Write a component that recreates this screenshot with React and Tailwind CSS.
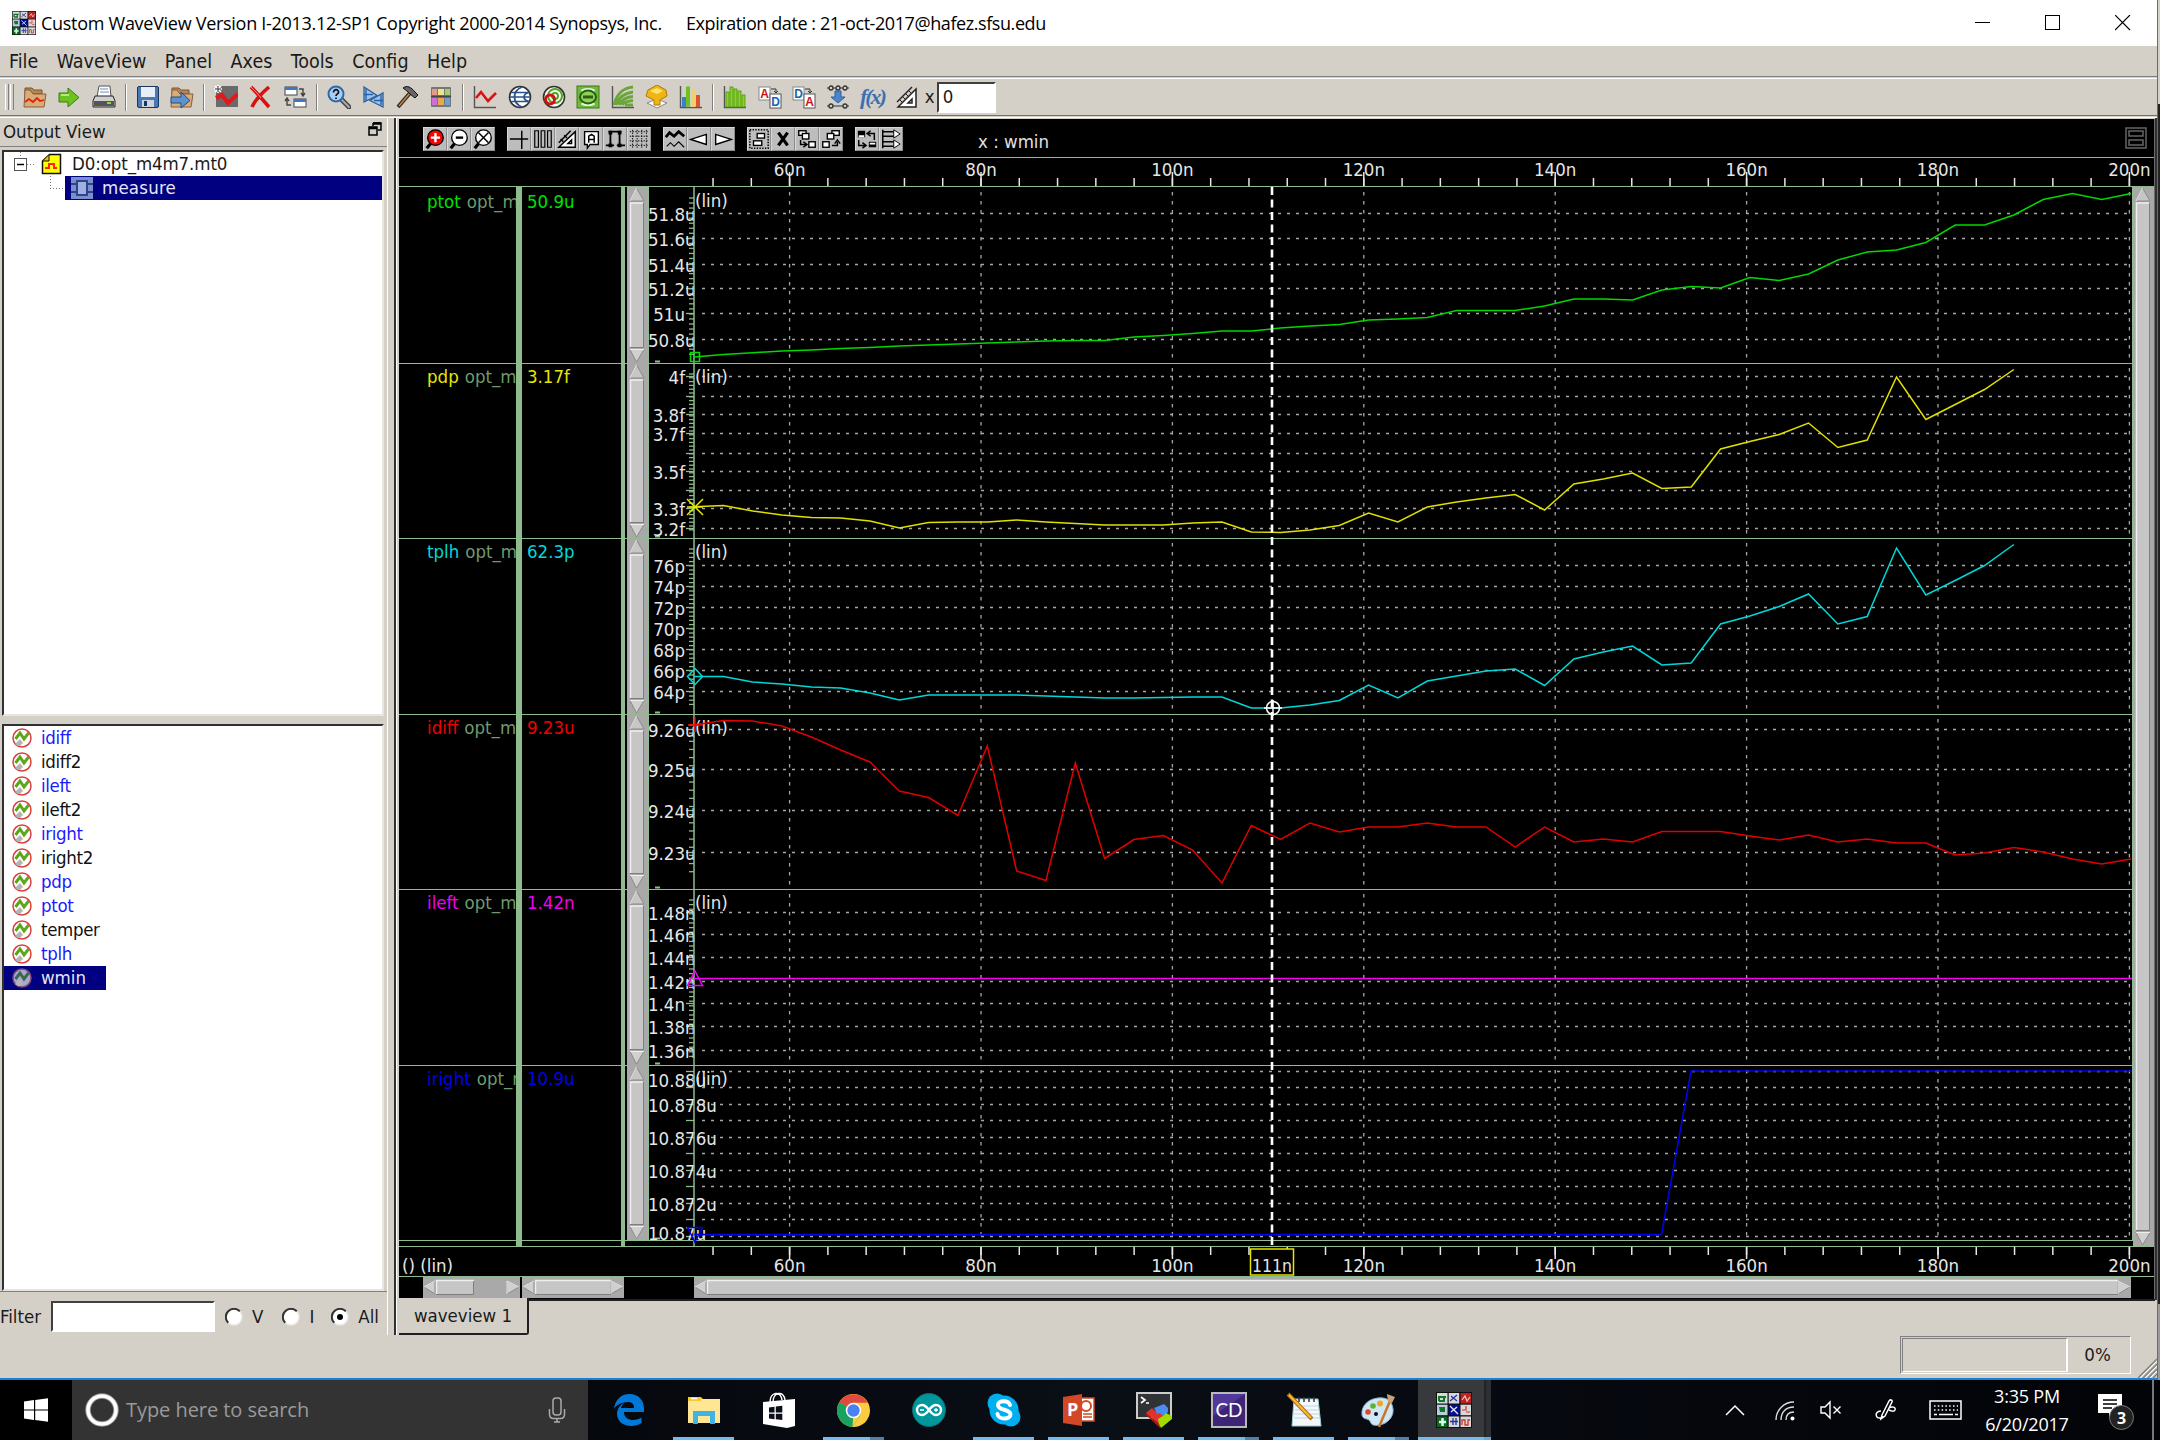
import React from "react";

const GREEN = "#8fbc8f";

function Ico({ s = 24, vb = 24, children, className = "" }) {
  return (
    <svg width={s} height={s} viewBox={`0 0 ${vb} ${vb}`} className={"block shrink-0 " + className}>
      {children}
    </svg>
  );
}

/* ---------- main toolbar icons ---------- */
const Folder = (
  <>
    <path d="M2 3h7l2 2h8v4H2z" fill="#b98552" stroke="#7d5530" />
    <path d="M1 22L2 5h5l3 4h13l-2 13z" fill="#d9ac78" stroke="#85603a" />
  </>
);
const OpenIcon = (
  <Ico>
    {Folder}
    <path d="M2 17l4-3 4 3 4-4 3 3 4-1" fill="none" stroke="#e3200f" strokeWidth="1.8" />
  </Ico>
);
const ArrowIcon = (
  <Ico>
    <path d="M2 8h9V3l11 9.5L11 22v-5H2z" fill="#6cc21f" stroke="#3c7a12" />
    <path d="M4 10h8" stroke="#b7ec6f" strokeWidth="2" />
  </Ico>
);
const PrintIcon = (
  <Ico>
    <path d="M7 1h11l1 11H5z" fill="#fff" stroke="#555" />
    <path d="M8 4h8M8 7h9" stroke="#6a8fc0" />
    <path d="M3 11h18l2 5v6H1v-6z" fill="#d0d0d0" stroke="#222" />
    <path d="M2 16h20v5H2z" fill="#555" />
    <path d="M15 18h4" stroke="#7ee03a" strokeWidth="2" />
  </Ico>
);
const SaveIcon = (
  <Ico>
    <rect x="1.5" y="1.5" width="21" height="21" rx="1.5" fill="#4a78b5" stroke="#17375f" />
    <rect x="5" y="2" width="14" height="10" fill="#e8eef6" />
    <rect x="6" y="15" width="12" height="7" fill="#cfd4da" />
    <rect x="8" y="16" width="3" height="5" fill="#17375f" />
  </Ico>
);
const ExportIcon = (
  <Ico>
    {Folder}
    <path d="M1 12h10V7l9 8.5L11 23v-5H1z" fill="#5b92cf" stroke="#234f83" />
  </Ico>
);
const NewWaveIcon = (
  <Ico>
    <path d="M7 1h17v21H2V8z" fill="#6a6a6a" />
    <path d="M2 13l6-3 6 8 10-9" fill="none" stroke="#e01a1a" strokeWidth="4.2" />
    <path d="M4 0v8M0 4h8M1 1l6 6M7 1L1 7" stroke="#fff" strokeWidth="1.6" />
    <path d="M4 1v6M1 4h6" stroke="#333" />
  </Ico>
);
const DeleteIcon = (
  <Ico>
    <path d="M3 2c4 4 12 13 18 20M21 2C14 8 7 15 4 22" stroke="#d81010" strokeWidth="3.6" fill="none" />
    <path d="M3 2c4 4 8 8 10 11" stroke="#ff8a80" fill="none" />
  </Ico>
);
const CycleIcon = (
  <Ico>
    <rect x="2" y="2" width="12" height="8" fill="#fff" stroke="#444" />
    <rect x="2" y="2" width="12" height="3" fill="#3f77c2" />
    <rect x="11" y="14" width="12" height="8" fill="#fff" stroke="#444" />
    <rect x="11" y="14" width="12" height="3" fill="#3f77c2" />
    <path d="M16 4h4v6M18 8l2 3 2-3M8 20H4v-6M2 16l2-3 2 3" fill="none" stroke="#444" strokeWidth="1.4" />
  </Ico>
);
const FindIcon = (
  <Ico>
    <path d="M14 14l8 8" stroke="#444" strokeWidth="5" strokeLinecap="round" />
    <path d="M14 14l8 8" stroke="#aaa" strokeWidth="2" strokeLinecap="round" />
    <circle cx="9" cy="9" r="7.5" fill="#a9cdf3" stroke="#2f67ae" strokeWidth="2" />
    <path d="M6.500 7.500c0-4 5.500-3.500 5 0-.3 1.500-2.500 1.500-2.500 3.500M9 12.500v1.500" fill="none" stroke="#111" strokeWidth="1.7" />
  </Ico>
);
const ReplayIcon = (
  <Ico>
    <path d="M3 2l13 8.500L3 17z" fill="#9cc3ec" stroke="#2a5f9f" strokeWidth="1.300" />
    <path d="M22 8v14L9 15.500z" fill="#9cc3ec" stroke="#2a5f9f" strokeWidth="1.300" />
    <path d="M3 9.500h9M13 15.500h9M5 4v12M20 10v10" stroke="#2a5f9f" strokeWidth="1.300" />
  </Ico>
);
const HammerIcon = (
  <Ico>
    <path d="M3 22L15 8" stroke="#3b2a1a" strokeWidth="4" />
    <path d="M4 21L15 8" stroke="#b98a55" strokeWidth="1.500" />
    <path d="M8 3c4-3 8-1 12 4l3 3-3 3-5-4c-2-2-4-4-7-6z" fill="#666" stroke="#111" />
  </Ico>
);
const PaletteIcon = (
  <Ico>
    <rect x="2" y="2" width="20" height="20" rx="1" fill="#777" />
    <rect x="3" y="4" width="5" height="6" fill="#e79a8a" /><rect x="9" y="4" width="6" height="6" fill="#eee58a" /><rect x="16" y="4" width="5" height="6" fill="#9dd070" />
    <rect x="3" y="13" width="5" height="7" fill="#cf70d8" /><rect x="9" y="13" width="6" height="7" fill="#e7a94e" /><rect x="16" y="13" width="5" height="7" fill="#6aa0d8" />
    <path d="M2 11.500h20" stroke="#444" strokeWidth="1.500" />
  </Ico>
);
const Axes = <path d="M1.500 1v21.500H23" fill="none" stroke="#555" strokeWidth="1.400" />;
const ChartIcon = (
  <Ico>
    {Axes}
    <path d="M3 13l5-6 7 9 8-8" fill="none" stroke="#d11" strokeWidth="2.600" />
  </Ico>
);
const SmithIcon = (
  <Ico>
    <circle cx="12" cy="12" r="10.500" fill="#fff" stroke="#333" strokeWidth="1.600" />
    <path d="M3 7.500h18M3 16.500h18M2 12h20" stroke="#28528c" strokeWidth="1.600" fill="none" />
    <path d="M14 2C4 6 4 18 14 22M22 7c-8 2-8 8 0 10" stroke="#28528c" strokeWidth="1.800" fill="none" />
  </Ico>
);
const PolarIcon = (
  <Ico>
    <circle cx="12" cy="12" r="10.500" fill="#fff" stroke="#333" strokeWidth="1.600" />
    <circle cx="13" cy="11" r="7" fill="none" stroke="#4ea51e" strokeWidth="2" />
    <circle cx="13" cy="11" r="3" fill="none" stroke="#4ea51e" strokeWidth="2" />
    <circle cx="8" cy="14.500" r="4.500" fill="none" stroke="#c81414" strokeWidth="3" />
  </Ico>
);
const EyeIcon = (
  <Ico>
    <rect x="1" y="1" width="22" height="22" fill="#6fb83a" stroke="#3c7a1a" />
    <ellipse cx="12" cy="5.500" rx="7" ry="2.500" fill="#e4f6da" />
    <ellipse cx="12" cy="19" rx="7" ry="2" fill="#e4f6da" />
    <ellipse cx="12" cy="12" rx="8" ry="6.500" fill="#8ed05a" stroke="#2a5f12" strokeWidth="2" />
    <path d="M7 12h10" stroke="#2a5f12" strokeWidth="3" />
  </Ico>
);
const CurvesIcon = (
  <Ico>
    {Axes}
    <path d="M3 20C6 8 12 3 22 2M5 20c3-8 8-12 17-13M8 20c3-6 7-8 14-8.500M11 20c2-3 6-4 11-4.500M14 20h8" fill="none" stroke="#6aa53a" strokeWidth="2.800" />
  </Ico>
);
const GoldIcon = (
  <Ico>
    <path d="M2 18l10-4 10 4-10 5z" fill="#fff" stroke="#888" />
    <path d="M3 5l9-5 9 5 1 6-7 4v5h-6v-5L1 11z" fill="#f0b414" stroke="#b07a06" />
    <path d="M5 6l7-3 6 3-6 3z" fill="#ffe46b" />
  </Ico>
);
const BarsIcon = (
  <Ico>
    {Axes}
    <rect x="3" y="12" width="4" height="10" fill="#3d7fc9" /><rect x="7" y="1.500" width="4" height="20" fill="#6cc21f" /><rect x="12" y="5" width="4" height="17" fill="#f0d070" /><rect x="17" y="10" width="4" height="12" fill="#d8532f" />
  </Ico>
);
const GreenBarsIcon = (
  <Ico>
    {Axes}
    <g fill="#8ed030" stroke="#4c9410" strokeWidth=".8"><rect x="3" y="7" width="3" height="15" /><rect x="7" y="2" width="3" height="20" /><rect x="11" y="4" width="3" height="18" /><rect x="15" y="6" width="3" height="16" /><rect x="19" y="10" width="3" height="12" /></g>
  </Ico>
);
function Letters({ a, ac, b, bc }) {
  return (
    <Ico>
      <rect x="1" y="2" width="11" height="13" fill="#fff" stroke="#888" />
      <rect x="12" y="9" width="11" height="14" fill="#fff" stroke="#555" />
      <path d="M13 4h5v4M16 6l2 2 2-2" fill="none" stroke="#333" />
      <text x="6.500" y="13" fontSize="12" fontWeight="700" textAnchor="middle" fill={ac} fontFamily="Liberation Sans">{a}</text>
      <text x="17.500" y="21" fontSize="12" fontWeight="700" textAnchor="middle" fill={bc} fontFamily="Liberation Sans">{b}</text>
    </Ico>
  );
}
const NetIcon = (
  <Ico>
    <path d="M1 3h22M1 21h22" stroke="#333" />
    <g fill="#d4d0c8" stroke="#333" strokeWidth="1.300"><circle cx="5" cy="3" r="2" /><circle cx="12" cy="3" r="2" /><circle cx="19" cy="3" r="2" /><circle cx="5" cy="21" r="2" /><circle cx="19" cy="21" r="2" /></g>
    <path d="M9 6h6v6h4l-7 6-7-6h4z" fill="#4b86cb" stroke="#2a5f9f" />
  </Ico>
);
const FxIcon = (
  <span className="font-['Liberation_Serif',serif] text-[22px] font-bold italic leading-none tracking-[-2px] text-[#3a70b0]">
    f(x)
  </span>
);
const RulerIcon = (
  <Ico>
    <path d="M3 22L21 4v18z" fill="#fff" stroke="#222" strokeWidth="1.500" />
    <path d="M13 18l4-4v4z" fill="none" stroke="#222" strokeWidth="1.500" />
    <path d="M2 17L17 2" stroke="#222" strokeWidth="1.500" />
    <path d="M4 14l3 3M7 11l3 3M10 8l3 3M13 5l3 3" stroke="#222" />
  </Ico>
);

const TOOL_GROUPS = [
  [OpenIcon, ArrowIcon, PrintIcon],
  [SaveIcon, ExportIcon],
  [NewWaveIcon, DeleteIcon, CycleIcon],
  [FindIcon, ReplayIcon, HammerIcon, PaletteIcon],
  [ChartIcon, SmithIcon, PolarIcon, EyeIcon, CurvesIcon, GoldIcon, BarsIcon],
  [
    GreenBarsIcon,
    <Letters a="A" ac="#c11" b="D" bc="#1565b5" />,
    <Letters a="D" ac="#1565b5" b="A" bc="#c11" />,
    NetIcon,
    FxIcon,
    RulerIcon,
  ],
];

/* ---------- plot toolbar icons ---------- */
const Lens = ({ fill, sign, c }) => (
  <>
    <path d="M3 22l5-6" stroke="#000" strokeWidth="3.500" />
    <circle cx="12.500" cy="10.500" r="8.500" fill={fill} stroke="#000" strokeWidth="1.500" />
    <path d={sign} stroke={c} strokeWidth="2.600" fill="none" />
  </>
);
const K = { stroke: "#000", strokeWidth: 1.6, fill: "none" };
const PLOT_GROUPS = [
  [
    <Lens fill="#f00" c="#fff" sign="M7.500 10.500h10M12.500 5.500v10" />,
    <Lens fill="#fff" c="#000" sign="M8.500 10.500h8" />,
    <><Lens fill="#fff" c="#fff" sign="" /><path d="M7 5l11 11M18 5L7 16" {...K} /></>,
  ],
  [
    <path d="M2 12h20M15 3v20" {...K} />,
    <path d="M3 3h4v18H3zM10 3h4v18h-4zM17 3h4v18h-4z" {...K} strokeWidth="1.300" />,
    <><path d="M3 21L21 4v17z" fill="#fff" stroke="#000" strokeWidth="1.500" /><path d="M13 17l4-4v4zM3 16L16 3M5 12l3 3M9 8l3 3" {...K} /></>,
    <><path d="M5 4h15v14h-9l-3 4v-4H5z" fill="#fff" stroke="#000" strokeWidth="1.500" /><path d="M9.500 16V9l3-2 3 2v7M9.500 12.500h6" {...K} /></>,
    <><path d="M7 4v16M17 4v16M5 4h14M2 19h9M14 19h9" {...K} strokeWidth="2" /><path d="M5 3h4v4H5zM15 3h4v4h-4zM5 17h4v4H5zM15 17h4v4h-4z" /></>,
    <path d="M5 2v20M10 2v20M15 2v20M20 2v20M2 4h20M2 9h20M2 14h20M2 19h20" {...K} strokeWidth="1" strokeDasharray="1.500 1.500" />,
  ],
  [
    <><path d="M2 10l4-5 5 4 5-5 6 5" {...K} strokeWidth="3" /><path d="M3 20l4-4 4 4 5-5 6 6" {...K} strokeWidth="1.200" /></>,
    <path d="M3 12.500L20 7v11z" fill="#fff" stroke="#000" strokeWidth="1.500" />,
    <path d="M21 12.500L4 7v11z" fill="#fff" stroke="#000" strokeWidth="1.500" />,
  ],
  [
    <><rect x="2" y="2" width="20" height="20" {...K} strokeDasharray="1.500 1.500" /><rect x="10" y="6" width="8" height="5" fill="#fff" stroke="#000" strokeWidth="1.500" /><rect x="6" y="14" width="9" height="5" fill="#fff" stroke="#000" strokeWidth="1.500" /></>,
    <path d="M7 5l10 14M17 5L7 19" {...K} strokeWidth="3.500" />,
    <><g fill="#fff" stroke="#000" strokeWidth="1.500"><rect x="3" y="3" width="8" height="5" /><rect x="7" y="6" width="7" height="6" /><rect x="14" y="15" width="7" height="6" /></g><path d="M5 13v5h6M8 15l4 3-4 3" {...K} /></>,
    <><g fill="#fff" stroke="#000" strokeWidth="1.500"><rect x="13" y="3" width="8" height="5" /><rect x="8" y="6" width="7" height="6" /><rect x="3" y="15" width="7" height="6" /></g><path d="M13 19h6v-4M16 17l3-4 3 4" {...K} /></>,
  ],
  [
    <><path d="M2 3h8v7H2zM14 15h8v6h-8z" /><path d="M3 8h6v2H3zM15 16h6v2h-6z" fill="#fff" /><path d="M13 6h7v7M16 3l-4 3 4 3M3 13v6h7M7 16l4 3-4 3" {...K} /></>,
    <><path d="M3 2v20M3 4h13v5H3M3 15h13v5H3" {...K} /><path d="M15 2l7 4.500-7 4.500zM15 13l7 4.500-7 4.500z" fill="#fff" stroke="#000" /></>,
  ],
];

function Toolbar() {
  return (
    <div className="flex h-[37px] items-center border-t border-white pl-[5px]">
      <div className="mr-[4px] flex h-[26px] gap-[1px]">
        <div className="w-[4px] border-l border-r border-l-white border-r-[#808080]" />
        <div className="w-[4px] border-l border-r border-l-white border-r-[#808080]" />
      </div>
      {TOOL_GROUPS.map((g, i) => (
        <React.Fragment key={i}>
          {i > 0 && (
            <div className="flex w-[9.700px] justify-center">
              <div className="h-[27px] w-[2px] border-l border-r border-l-[#808080] border-r-white" />
            </div>
          )}
          {g.map((ic, j) => (
            <div key={j} className="flex w-[34.300px] items-center justify-center">{ic}</div>
          ))}
        </React.Fragment>
      ))}
      <span className="ml-[1px]">x</span>
      <div className="ml-[2px] h-[31px] w-[59px] border-2 border-b-white border-l-[#404040] border-r-white border-t-[#404040] bg-white pl-[4px] leading-[26px]">0</div>
    </div>
  );
}

/* ---------- left dock ---------- */
const SIGNALS = [
  ["idiff", 1], ["idiff2", 0], ["ileft", 1], ["ileft2", 0], ["iright", 1], ["iright2", 0],
  ["pdp", 1], ["ptot", 1], ["temper", 0], ["tplh", 1], ["wmin", 2],
];

function SignalIcon({ sel }) {
  return (
    <Ico s={20} vb={20}>
      <circle cx="10" cy="10" r="9" fill={sel ? "#a9a9cf" : "#fff"} stroke={sel ? "#7d4a78" : "#d8403c"} strokeWidth="1.500" />
      <path d="M3 16l5-5 3 4-3 3H6z" fill="#b5b5b5" />
      <path d="M3.500 11L8 5l4 6 4.500-6" fill="none" stroke={sel ? "#3b6650" : "#5da51a"} strokeWidth="3" />
    </Ico>
  );
}

function Radio({ label, on, className }) {
  return (
    <div className={"flex items-center " + className}>
      <Ico s={18} vb={18}>
        <circle cx="9" cy="9" r="8" fill="#fff" stroke="#ece9e2" strokeWidth="1.500" />
        <path d="M3.200 14.800A8 8 0 0 1 14.800 3.200" fill="none" stroke="#333" strokeWidth="2" />
        {on && <circle cx="9" cy="9" r="3" fill="#000" />}
      </Ico>
      <span className="ml-[9px]">{label}</span>
    </div>
  );
}

const SUNK = "border-2 border-b-[#e8e5de] border-l-[#303030] border-r-[#e8e5de] border-t-[#303030] bg-white";

function Dock() {
  return (
    <div className="flex h-[1217px] w-[388px] flex-col border-r border-r-white">
      <div className="flex h-[29px] items-center justify-between border-b border-b-[#808080] pl-[3px] pr-[5px]">
        <span>Output View</span>
        <Ico s={14} vb={14} className="mb-[6px]">
          <path d="M5 1h8v7h-3M5 1v3" fill="none" stroke="#000" strokeWidth="1.500" /><path d="M5 1.500h8" stroke="#000" strokeWidth="2.500" />
          <rect x="1" y="5" width="8" height="8" fill="none" stroke="#000" strokeWidth="1.500" /><path d="M1 6h8" stroke="#000" strokeWidth="2.500" />
        </Ico>
      </div>
      <div className={"ml-[2px] mt-[3px] h-[566px] w-[382px] " + SUNK}>
        <div className="flex h-[24px] items-center pl-[9px]">
          <svg width="28" height="24" className="shrink-0">
            <path d="M7.500 0v5M14 12.500h9" stroke="#777" strokeDasharray="1 2" />
            <rect x="1.500" y="6.500" width="12" height="12" fill="#fff" stroke="#555" />
            <path d="M4 12.500h7" stroke="#000" strokeWidth="1.500" />
          </svg>
          <Ico s={22} vb={22}>
            <path d="M1.500 20.500V8l7-6.500h11v19z" fill="#ff0" stroke="#111" strokeWidth="1.500" />
            <path d="M2 8h6V2" fill="#e4c400" stroke="#111" />
            <path d="M4 15h4V11h5v4h3" fill="none" stroke="#f22" strokeWidth="2" />
          </Ico>
          <span className="-mt-px ml-[9px] tracking-[-0.100px]">D0:opt_m4m7.mt0</span>
        </div>
        <div className="flex h-[24px]">
          <svg width="61" height="24" className="shrink-0">
            <path d="M46.500 0v12.500M46 12.500h15" fill="none" stroke="#777" strokeDasharray="1 2" />
          </svg>
          <div className="flex flex-1 items-center bg-[#000080] pl-[6px] text-[#e6e6f5]">
            <Ico s={22} vb={22}>
              <rect width="22" height="22" fill="#7b8fd0" />
              <rect x="6" y="4" width="10" height="14" fill="#9fb0e6" stroke="#2d4686" strokeWidth="2" />
              <path d="M0 7h5M0 15h5M17 7h5M17 15h5" stroke="#2d4686" strokeWidth="2" />
            </Ico>
            <span className="ml-[9px] tracking-[0.200px]">measure</span>
          </div>
        </div>
      </div>
      <div className={"ml-[2px] mt-[8px] h-[567px] w-[382px] " + SUNK}>
        {SIGNALS.map(([n, k]) => (
          <div key={n} className="flex h-[24px]">
            <div className={"flex items-center pl-[8px] " + (k === 2 ? "w-[102px] bg-[#000080] text-[#e6e6f5]" : k ? "text-[#1a1aff]" : "text-[#111]")}>
              <SignalIcon sel={k === 2} />
              <span className={"ml-[9px] " + (k === 2 ? "" : "tracking-[-0.350px]")}>{n}</span>
            </div>
          </div>
        ))}
      </div>
      <div className="flex flex-1 items-center border-t border-t-[#808080] pt-[6px]">
        <span className="w-[51px]">Filter</span>
        <div className="h-[31px] w-[164px] border-2 border-b-white border-l-[#404040] border-r-white border-t-[#404040] bg-white" />
        <Radio label="V" className="ml-[10px]" />
        <Radio label="I" className="ml-[19px]" />
        <Radio label="All" on className="ml-[17px]" />
      </div>
    </div>
  );
}

/* ---------- scroll bars ---------- */
function VScroll({ h }) {
  return (
    <svg width="21" height={h} className="block">
      <rect width="21" height={h} fill="#a9a9a9" />
      <path d={`M9.500 1L3 14h14z`} fill="#c6c6c6" stroke="#8a8a8a" />
      <path d="M9.500 1L3 14" stroke="#eee" />
      <rect x="3" y="15.500" width="13" height={h - 31} fill="#c6c6c6" />
      <path d={`M3.500 ${h - 16}V16H16`} fill="none" stroke="#efefef" strokeWidth="1.500" />
      <path d={`M16.500 16V${h - 15.500}H3`} fill="none" stroke="#7e7e7e" />
      <path d={`M3 ${h - 13.500}h14L9.500 ${h - 1}z`} fill="#d0d0d0" stroke="#8a8a8a" />
      <path d={`M3 ${h - 13.500}h14`} stroke="#eee" />
    </svg>
  );
}
function HScroll({ w, a, b }) {
  return (
    <svg width={w} height="21" className="block shrink-0">
      <rect width={w} height="21" fill="#a9a9a9" />
      <path d="M1 10L12 4v13z" fill="#d0d0d0" stroke="#8a8a8a" />
      <path d="M1 10L12 4" stroke="#f2f2f2" />
      <rect x={a} y="3" width={b - a} height="14" fill="#c6c6c6" />
      <path d={`M${a + 0.5} 17V3.500H${b}`} fill="none" stroke="#efefef" strokeWidth="1.500" />
      <path d={`M${a} 17.500H${b - 0.500}V4`} fill="none" stroke="#7e7e7e" />
      <path d={`M${w - 1} 10L${w - 13} 4v13z`} fill="#d0d0d0" stroke="#8a8a8a" />
      <path d={`M${w - 13} 17V4L${w - 1} 10`} fill="none" stroke="#eee" />
    </svg>
  );
}

/* ---------- panels ---------- */
const PANELS = [
  { name: "ptot", run: "opt_m", color: "#00e000", value: "50.9u", rowH: "h-[177px]", pt: "pt-[3px]", h: 176 },
  { name: "pdp", run: "opt_m", color: "#e6e600", value: "3.17f", rowH: "h-[175px]", pt: "pt-px", h: 174 },
  { name: "tplh", run: "opt_m", color: "#00d8d8", value: "62.3p", rowH: "h-[176px]", pt: "pt-px", h: 175 },
  { name: "idiff", run: "opt_m", color: "#f00000", value: "9.23u", rowH: "h-[175px]", pt: "pt-px", h: 174 },
  { name: "ileft", run: "opt_m", color: "#f000f0", value: "1.42n", rowH: "h-[176px]", pt: "pt-px", h: 175 },
  { name: "iright", run: "opt_m", color: "#0000f0", value: "10.9u", rowH: "h-[175px]", pt: "pt-px", h: 174 },
];

const AXES = [
  { top: 187, bot: 363, step: 5.04, grid: [213.5, 238.5, 264.5, 288.5, 313.5, 339.5], labels: ["51.8u", "51.6u", "51.4u", "51.2u", "51u", "50.8u"] },
  { top: 363, bot: 538, step: 3.8, grid: [376.5, 396.5, 414.5, 433.5, 453.5, 471.5, 490.5, 508.5, 528.5], labels: ["4f", "", "3.8f", "3.7f", "", "3.5f", "", "3.3f", "3.2f"] },
  { top: 538, bot: 714, step: 4.2, grid: [565.5, 586.5, 607.5, 628.5, 649.5, 670.5, 691.5], labels: ["76p", "74p", "72p", "70p", "68p", "66p", "64p"] },
  { top: 714, bot: 889, step: 8.15, grid: [729.5, 769.5, 810.5, 852.5], labels: ["9.26u", "9.25u", "9.24u", "9.23u"] },
  { top: 889, bot: 1065, step: 4.6, grid: [912.5, 934.5, 957.5, 981.5, 1003.5, 1026.5, 1050.5], labels: ["1.48n", "1.46n", "1.44n", "1.42n", "1.4n", "1.38n", "1.36n"] },
  { top: 1065, bot: 1240, step: 0, grid: [1071.5, 1087.5, 1104.5, 1120.5, 1137.5, 1153.5, 1170.5, 1186.5, 1203.5, 1219.5, 1236.5], labels: ["10.88u", "", "10.878u", "", "10.876u", "", "10.874u", "", "10.872u", "", "10.87u"] },
];

const WAVES = [
  ["#00d800", [357, 354.5, 352.7, 351, 350, 348.5, 347.5, 346, 345, 344, 343, 342, 341, 340.5, 340.5, 337, 335.5, 333.5, 331, 331, 328, 326, 324.5, 320, 319, 317.5, 310.5, 310.5, 310.5, 306, 299, 299, 300, 290, 286.5, 288, 277.5, 280.5, 274, 260, 252, 250, 242.5, 225, 225, 215, 199.5, 193.5, 199.5, 193.5]],
  ["#e0e000", [506.7, 505.5, 511, 515, 517.5, 518, 521, 528, 522.5, 522, 522, 520, 522, 523.5, 525, 525, 525, 523, 522, 532, 532.5, 530, 525.5, 513, 522, 507, 502, 498, 494.5, 510, 484, 479, 473, 488.5, 487, 449, 441.5, 434.5, 423, 447.5, 440, 377, 419.5, 404.5, 389.5, 369.5]],
  ["#00d8d8", [676.5, 676.5, 682, 684, 687, 688, 693, 700, 695, 695, 695, 695, 696, 697, 698, 698, 697.5, 697, 697, 708, 708, 705, 700.5, 685, 698, 681, 676, 671, 669, 685.5, 659, 652, 646, 665, 663, 624, 616, 606.500, 594, 624, 616.500, 548, 595, 580.500, 565.500, 544.500]],
  ["#e00000", [725, 720.5, 721, 726, 737, 750, 762, 791, 797.5, 815.500, 746, 871, 880.500, 763, 858.500, 839.500, 835.500, 850, 883, 825.500, 839.500, 823, 832, 827, 827, 823, 827, 827, 847, 827, 842, 839, 842, 831.500, 831.500, 831.500, 836, 840, 835, 842, 839, 843, 843, 855, 853, 847.500, 852, 859, 864, 859]],
];
const X0 = 694;
const DX = 29.33;
const tickX = (n) => 789.6 + (n - 60) * 9.57;
const MINOR = Array.from({ length: 38 }, (_, i) => 52 + i * 4);
const MAJOR = [60, 80, 100, 120, 140, 160, 180, 200];
const FONT = "'DejaVu Sans Condensed','DejaVu Sans',sans-serif";

function XAxis({ top, bottom }) {
  const line = bottom ? top : top + 28;
  return (
    <svg width="1755" height="29" viewBox={`399 ${top} 1755 29`} className="block" fontFamily={FONT} fontSize="18.500" fill="#e6e6e6">
      {MINOR.map((n) => (
        <path key={n} d={bottom ? `M${tickX(n)} ${line}v8` : `M${tickX(n)} ${line}v-8`} stroke="#e6e6e6" strokeWidth="1.500" />
      ))}
      {MAJOR.map((n) => (
        <g key={n}>
          <path d={bottom ? `M${tickX(n)} ${line}v12` : `M${tickX(n)} ${line}v-14`} stroke="#e6e6e6" strokeWidth="1.500" />
          <text x={tickX(n)} y={bottom ? top + 25 : top + 18} textAnchor="middle">{n}n</text>
        </g>
      ))}
      {bottom && (
        <>
          <text x="402" y={top + 25}>() (lin)</text>
          <rect x="1250.500" y={top + 2} width="43" height="26" fill="#000" stroke="#e6e600" strokeWidth="1.500" />
          <text x="1272" y={top + 25} textAnchor="middle" textLength="40" lengthAdjust="spacingAndGlyphs">111n</text>
        </>
      )}
    </svg>
  );
}

function Plot() {
  return (
    <svg width="1484" height="1059" viewBox="649 187 1484 1059" className="block" fontFamily={FONT} fontSize="18.500">
      {AXES.map((a, i) => (
        <g key={i}>
          {a.grid.map((y, j) => (
            <path key={j} d={`M702 ${y}H2130`} stroke="#a6a6a6" strokeWidth="1.300" strokeDasharray="3 6" />
          ))}
          {MAJOR.map((n) => (
            <path key={n} d={`M${tickX(n)} ${a.top + 5}V${a.bot}`} stroke="#a6a6a6" strokeWidth="1.300" strokeDasharray="3.500 5.500" />
          ))}
          <path d={`M648 ${a.bot + 0.500}H2133`} stroke={GREEN} />
          <path d={`M655 ${a.bot - 1.500}h5`} stroke={GREEN} strokeWidth="2" />
          {a.step > 0 &&
            Array.from({ length: Math.floor((a.bot - a.top - 14) / a.step) }, (_, j) => (
              <path key={j} d={`M689 ${a.top + 11 + j * a.step}h5`} stroke={GREEN} strokeWidth="1.300" />
            ))}
          {a.grid.map((y, j) => (
            <path key={j} d={`M686 ${y}h8`} stroke={GREEN} strokeWidth="1.300" />
          ))}
          <g fill="#e6e6e6">
            {a.labels.map((t, j) =>
              t.length > 4 ? (
                <text key={j} x="648" y={i === 5 && j === 0 ? 1087 : i === 5 && j === 10 ? 1240 : a.grid[j] + 7.500}>{t}</text>
              ) : (
                <text key={j} x="685" y={a.grid[j] + 7.500} textAnchor="end">{t}</text>
              )
            )}
            <text x="695" y={a.top + 20}>(lin)</text>
          </g>
        </g>
      ))}
      <path d="M694 187V1246" stroke={GREEN} strokeWidth="1.500" />
      <path d="M2132.500 187V1241" stroke={GREEN} />
      {WAVES.map(([c, ys]) => (
        <polyline key={c} points={ys.map((y, k) => `${X0 + k * DX},${y}`).join(" ")} fill="none" stroke={c} strokeWidth="1.500" />
      ))}
      <path d="M694 978.500H2132" stroke="#f000f0" strokeWidth="1.500" />
      <path d="M694 1234.500H1661.500L1691 1071H2132" fill="none" stroke="#0000f0" strokeWidth="1.500" />
      <g fill="none" strokeWidth="1.500">
        <rect x="690.500" y="352.500" width="9" height="9" stroke="#00e000" />
        <path d="M687 499l16 16M687 515l16-16M687 507h16" stroke="#e6e600" />
        <path d="M695 668.500l7.500 8-7.500 8-7.500-8z" stroke="#00d8d8" />
        <path d="M695 717v15M688 725h15" stroke="#f00" />
        <path d="M695 971l7.500 14.500h-15z" stroke="#f000f0" />
        <path d="M695 1242l7.500-14.500h-15z" stroke="#0000f0" />
      </g>
      <path d="M1272 187V1246" stroke="#fff" strokeWidth="2.600" strokeDasharray="8 4.500" />
      <circle cx="1273" cy="708" r="6.500" fill="none" stroke="#fff" strokeWidth="1.500" />
      <path d="M1264 708h18M1273 700v16" stroke="#fff" strokeWidth="1.500" />
    </svg>
  );
}

function WaveView() {
  return (
    <div className="flex h-[1180px] w-[1756px] flex-col border-r border-r-[#6a6a6a] bg-black">
      <div className="flex h-[39px] items-center border-b border-b-[#8fbc8f] pl-[24px] pr-[7px]">
        {PLOT_GROUPS.map((g, i) => (
          <div key={i} className="mr-[12px] mt-px flex">
            {g.map((ic, j) => (
              <div key={j} className="h-[24px] w-[24px] border-b border-l border-r border-t border-b-[#8c8c8c] border-l-[#d8d8d8] border-r-[#8c8c8c] border-t-[#d8d8d8] bg-[#bdbdbd]">
                <Ico s={22}>{ic}</Ico>
              </div>
            ))}
          </div>
        ))}
        <span className="ml-[63px] mt-[8px] flex-1 text-[#e0e0e0]">x : wmin</span>
        <Ico s={22} vb={22}>
          <rect x="1" y="1" width="20" height="20" fill="none" stroke="#666" strokeWidth="1.500" />
          <rect x="4" y="4" width="14" height="5" fill="none" stroke="#666" strokeWidth="1.500" />
          <rect x="4" y="13" width="14" height="5" fill="none" stroke="#666" strokeWidth="1.500" />
        </Ico>
      </div>
      <div className="h-[29px] border-b border-b-[#8fbc8f]"><XAxis top={158} /></div>
      <div className="flex h-[1060px] border-b border-b-[#8fbc8f]">
        <div className="flex w-[250px] flex-col">
          {PANELS.map((p) => (
            <div key={p.name} className={"flex border-b border-b-[#8fbc8f] " + p.rowH}>
              <div className={"w-[117px] overflow-hidden whitespace-nowrap pl-[28px] text-[#6f9a6f] " + p.pt}>
                <span style={{ color: p.color }}>{p.name}</span>
                <span className="ml-[6px]">{p.run}</span>
              </div>
              <div className="-mb-px w-[6px] bg-[#8fbc8f]" />
              <div className={"w-[99px] pl-[5px] " + p.pt} style={{ color: p.color }}>{p.value}</div>
              <div className="-mb-px w-[4px] bg-[#8fbc8f]" />
              <div className="ml-[2px] w-[21px]"><VScroll h={p.h} /></div>
              <div className="w-px bg-[#8fbc8f]" />
            </div>
          ))}
          <div className="flex flex-1">
            <div className="ml-[117px] w-[6px] bg-[#8fbc8f]" />
            <div className="ml-[99px] w-[4px] bg-[#8fbc8f]" />
          </div>
        </div>
        <Plot />
        <div className="w-[21px]"><VScroll h={1059} /></div>
      </div>
      <div className="h-[30px] border-b border-b-[#8fbc8f]"><XAxis top={1247} bottom /></div>
      <div className="flex h-[22px] pl-[24px]">
        <HScroll w={97} a={13} b={51} />
        <div className="w-[2px]" />
        <HScroll w={102} a={13} b={89} />
        <div className="w-[70px]" />
        <HScroll w={1437} a={13} b={1424} />
      </div>
    </div>
  );
}

/* ---------- taskbar ---------- */
function GridLogo({ s }) {
  return (
    <Ico s={s} vb={36}>
      <rect width="36" height="36" fill="#111" />
      <g fill="#d8d8d8">
        <rect x="1" y="1" width="10.500" height="10.500" /><rect x="12.700" y="1" width="10.500" height="10.500" /><rect x="24.500" y="12.700" width="10.500" height="10.500" />
        <rect x="12.700" y="24.500" width="10.500" height="10.500" /><rect x="24.500" y="24.500" width="10.500" height="10.500" />
      </g>
      <rect x="24.500" y="1" width="10.500" height="10.500" fill="#b22" />
      <rect x="1" y="12.700" width="10.500" height="10.500" fill="#bcd" /><rect x="1" y="24.500" width="10.500" height="10.500" fill="#0a6a1a" />
      <rect x="12.700" y="12.700" width="10.500" height="10.500" fill="#00108c" />
      <path d="M3 9V5h6v-1M3 9h5V6" stroke="#0a7a2a" strokeWidth="2" fill="none" />
      <path d="M3 15h6v5H4z" fill="#0a7a2a" />
      <path d="M14 9l7-6M15 4l6 5" stroke="#2233aa" strokeWidth="1.300" />
      <path d="M26 8l3-4 2 5 3-4" stroke="#f3c9c9" fill="none" strokeWidth="1.200" />
      <path d="M14 14l8 8M15 20l6-5" stroke="#e6e6ff" strokeWidth="1.300" />
      <path d="M26 18h4v-4M30 20h4" stroke="#c33" fill="none" strokeWidth="1.200" />
      <path d="M3 30h7M6.500 26v8" stroke="#cfe" strokeWidth="2.500" />
      <path d="M14 29.500h8M17 26v7M20 26v7" stroke="#2233aa" strokeWidth="1.300" />
      <path d="M26 33v-5h3v5h3v-5h2" stroke="#c33" fill="none" strokeWidth="1.300" />
    </Ico>
  );
}
const APPS = [
  { u: 0, ic: <Ico s={32} vb={32}><path d="M1 15C2 6 8 0 16.500 0 26 0 31 7 31 14v4H11c0 6 5 8 9 8 4 0 6-1 8.500-2.500V29c-3 2-6.500 3-10.500 3C10 32 4 27 4 20c0-5 3-9 7-11-2 2-3 4-3 5h13c0-4-2-6-6-6-6 0-12 3-14 7z" fill="#0078d7" /></Ico> },
  { u: 1, ic: <Ico s={32} vb={32}><path d="M0 3h13l2 2H0z" fill="#f5b91f" /><rect y="5" width="32" height="24" fill="#ffe694" /><path d="M0 3h13v4H0z" fill="#fac832" /><path d="M3 4.500h6" stroke="#fff" strokeWidth="1.500" /><path d="M5 30V17h22v13h-5v-8H10v8z" fill="#3fb3e6" /></Ico> },
  { u: 0, ic: <Ico s={36} vb={36}><path d="M2 10l32-3v27l-8 2-24-4z" fill="#fff" /><path d="M9 10c0-10 11-12 12-2M12 10c0-10 11-12 12-2" fill="none" stroke="#fff" strokeWidth="1.500" /><path d="M8 15.500l5.500-.7v5.700H8zM14.800 14.600l6.500-.8v6.700h-6.500zM8 21.700h5.500v5.500L8 26.600zM14.800 21.700h6.500V28l-6.500-.7z" fill="#0a0f18" /></Ico> },
  { u: 2, ic: <Ico s={33} vb={32}><circle cx="16" cy="16" r="16" fill="#fccc3f" /><path d="M16 16L2.100 8A16 16 0 0 0 15 32l8-12z" fill="#1aa260" /><path d="M16 16L2.100 8a16 16 0 0 1 27.800 0.500H16z" fill="#e04a3f" /><path d="M2.100 8L9 20l7-4z" fill="#1aa260" /><path d="M15 32l8-12-7-4z" fill="#fccc3f" /><circle cx="16" cy="16" r="7.500" fill="#fff" /><circle cx="16" cy="16" r="6" fill="#4a80f0" /></Ico> },
  { u: 0, ic: <Ico s={34} vb={34}><circle cx="17" cy="17" r="16.500" fill="#00979c" stroke="#0b6d72" /><path d="M17 17c-3-4-5-5-7-5a5 5 0 0 0 0 10c2 0 4-1 7-5s5-5 7-5a5 5 0 0 1 0 10c-2 0-4-1-7-5z" fill="none" stroke="#fff" strokeWidth="2.400" /><path d="M8 17h4M22 17h4M24 15v4" stroke="#fff" strokeWidth="1.300" /></Ico> },
  { u: 1, ic: <Ico s={34} vb={34}><circle cx="10" cy="10" r="9.500" fill="#00aff0" /><circle cx="24" cy="24" r="9.500" fill="#00aff0" /><circle cx="17" cy="17" r="14.500" fill="#00aff0" /><path d="M23 12c-1.500-5-12-5-12 0 0 6 12.500 3.500 12.500 9.500 0 5.500-12 5.500-13-.5" fill="none" stroke="#fff" strokeWidth="4" strokeLinecap="round" /></Ico> },
  { u: 1, ic: <Ico s={32} vb={32}><rect x="17" y="4" width="14" height="23" fill="#fff" stroke="#d04a27" strokeWidth="1.500" /><path d="M20 20h9M20 23h9" stroke="#d04a27" strokeWidth="1.500" /><circle cx="23" cy="12" r="5" fill="none" stroke="#d04a27" strokeWidth="2" /><path d="M0 3l19-3v32L0 29z" fill="#d24726" /><text x="4" y="22" fontSize="18" fontWeight="700" fill="#fff" fontFamily="Open Sans">P</text></Ico> },
  { u: 1, ic: <Ico s={36} vb={36}><rect x="1" y="1" width="34" height="25" fill="#303336" stroke="#ccc" strokeWidth="2" /><path d="M5 5l4 3-4 3M10 11h3" fill="none" stroke="#fff" strokeWidth="1.700" /><path d="M10 21l6-5 5 5 5-2 4 6-6 8z" fill="#e2332a" /><path d="M10 21l14 12v3L10 23z" fill="#a81d18" /><path d="M18 16l10-4 4 4v4l-5 4-3-3-3 1z" fill="#4a8cf0" /><path d="M22 27l5-3 3-3 6 3v3L25 36l-2-4z" fill="#9fdc00" /></Ico> },
  { u: 2, ic: <Ico s={36} vb={36}><rect x="1" y="1" width="34" height="34" fill="#3d2476" stroke="#b9b9b9" strokeWidth="2" /><path d="M2 2h32L2 24z" fill="#52389a" /><text x="18" y="25" fontSize="19" textAnchor="middle" fill="#fff" fontFamily="Lato">CD</text></Ico> },
  { u: 1, ic: <Ico s={36} vb={36}><path d="M8 7h24l3 27H6z" fill="#f4f8fb" stroke="#9cc" /><path d="M9 14h23M9 18h24M8 22h25M8 26h26" stroke="#bcd3e2" /><path d="M13 5v5M18 5v5M23 5v5M28 5v5" stroke="#333" strokeWidth="1.500" /><path d="M2 2l24 25" stroke="#a86a10" strokeWidth="4" /><path d="M3 3l22 23" stroke="#f9b93a" strokeWidth="2.200" /></Ico> },
  { u: 2, ic: <Ico s={36} vb={36}><path d="M17 6C7 7 0 14 1 23c1 5 6 3 8 6 1 4 4 5 9 4 9-1 15-9 14-16C31 9 26 5 17 6z" fill="#cfe6f5" stroke="#8fb6d0" /><circle cx="7" cy="20" r="2.800" fill="#e2452f" /><circle cx="12" cy="14" r="2.800" fill="#5bb531" /><circle cx="19" cy="11.500" r="3" fill="#f0a81e" /><circle cx="15" cy="22" r="2" fill="#0a0f18" /><path d="M18 35L29 9" stroke="#c9762a" strokeWidth="2.500" /><path d="M26 2l8 3-3 6-4-1z" fill="#c9a27a" /></Ico> },
];

function Taskbar() {
  return (
    <div className="flex h-[60px] bg-gradient-to-r from-[#020305] via-[#0a0e15] to-[#030408] font-['Open_Sans',sans-serif] text-white">
      <div className="flex w-[72px] items-center justify-center bg-black">
        <Ico s={24}><path d="M0 3.500l10-1.400v9.300H0zM11.200 2L24 .2v11.200H11.200zM0 12.600h10v9.300l-10-1.400zM11.200 12.600H24v11.200l-12.800-1.800z" fill="#fff" /></Ico>
      </div>
      <div className="flex w-[516px] items-center bg-[#333333] pl-[13px]">
        <Ico s={34} vb={34}><circle cx="17" cy="17" r="14" fill="none" stroke="#999" strokeWidth="5.500" /><circle cx="17" cy="17" r="14" fill="none" stroke="#fff" strokeWidth="3.500" /></Ico>
        <span className="ml-[7px] flex-1 text-[20px] tracking-[-0.050px] text-[#9a9a9a]">Type here to search</span>
        <Ico s={26} vb={26} className="mr-[18px]">
          <rect x="9" y="1" width="8" height="17" rx="3" fill="none" stroke="#aaa" strokeWidth="1.500" />
          <path d="M5.500 12v5c0 3 2 4.500 4 4.500h7c2 0 4-1.500 4-4.500v-5M13 22v3M10 25h6" fill="none" stroke="#aaa" strokeWidth="1.500" />
        </Ico>
      </div>
      <div className="ml-[3px] flex">
        {APPS.map((a, i) => (
          <div key={i} className="flex w-[75px] flex-col items-center">
            <div className="flex h-[57px] items-center pt-[3px]">{a.ic}</div>
            {a.u > 0 && (
              <div className="flex h-[3px] w-[61px] bg-[#76b9ed]">
                {a.u === 2 && <div className="ml-auto w-[14px] bg-[#527fa5]" />}
              </div>
            )}
          </div>
        ))}
        <div className="ml-[2px] flex w-[73px] flex-col bg-[#38393c]">
          <div className="flex h-[57px]">
            <div className="flex w-[68px] items-center justify-center border-r-2 border-r-[#222326] pl-[6px] pt-[3px]"><GridLogo s={36} /></div>
            <div className="flex-1 bg-[#2e2f32]" />
          </div>
          <div className="flex h-[3px] bg-[#76b9ed]"><div className="ml-auto w-[7px] bg-[#6aa6d6]" /></div>
        </div>
      </div>
      <div className="ml-auto flex items-center">
        <Ico s={20} vb={20}><path d="M1 15l9-9 9 9" fill="none" stroke="#fff" strokeWidth="1.500" /></Ico>
        <Ico s={22} vb={22} className="ml-[29px] mt-[2px]"><g fill="none" stroke="#ddd" strokeWidth="1.400"><path d="M2 20C2 10 10 2 20 2" /><path d="M7 20C7 12 12 7 20 7" /><path d="M12 20c0-5 3-8 8-8" /></g><circle cx="18.500" cy="18.500" r="2" fill="#fff" /></Ico>
        <Ico s={22} vb={22} className="ml-[24px]"><path d="M1 8h4l5-5v16l-5-5H1zM13.500 7.500l7 7M20.500 7.500l-7 7" fill="none" stroke="#fff" strokeWidth="1.400" /></Ico>
        <Ico s={22} vb={22} className="ml-[33px]"><path d="M7 16L14 2c1-2 4-1 3 1l-7 14-4 3zM6 12c-4 0-6 3-4 6 2 2 5 1 6-1M14 9c3-2 7-1 6 2-1 2-4 1-6 0" fill="none" stroke="#fff" strokeWidth="1.500" /></Ico>
        <svg width="34" height="20" className="ml-[32px] block"><rect x="1" y="1" width="31" height="18" fill="none" stroke="#fff" strokeWidth="1.500" /><path d="M5 6h24M5 10h24" stroke="#fff" strokeWidth="1.500" strokeDasharray="1.500 2.300" /><path d="M5 14.500h3M10 14.500h14M26 14.500h3" stroke="#fff" strokeWidth="1.500" /></svg>
        <div className="ml-[20px] w-[88px] text-center text-[18px] leading-[28px] tracking-[-0.200px]">
          <div>3:35 PM</div>
          <div>6/20/2017</div>
        </div>
        <svg width="38" height="38" className="ml-[26px] mt-[4px] block">
          <path d="M1 1h24v19h-8l-5 5v-5H1z" fill="#fff" />
          <path d="M6 7h14M6 11h14M6 15h9" stroke="#000" strokeWidth="1.300" />
          <circle cx="24.500" cy="24.500" r="12" fill="#222" stroke="#777" />
          <text x="24.500" y="30.500" fontSize="16" fontWeight="700" textAnchor="middle" fill="#fff">3</text>
        </svg>
        <div className="ml-[17px] mr-[6px] h-[60px] w-[2px] bg-[#777]" />
      </div>
    </div>
  );
}

export default function App() {
  return (
    <div className="flex h-[1440px] w-[2160px] flex-col overflow-hidden bg-[#d4d0c8] font-['DejaVu_Sans_Condensed','DejaVu_Sans',sans-serif] text-[18.500px] leading-[24px] text-[#1a1a1a]">
      <div className="flex h-[1380px]">
        <div className="flex h-[1380px] w-[2158px] flex-col border-b-2 border-r border-b-[#1a80d6] border-r-[#1a80d6]">
          <div className="flex h-[46px] shrink-0 items-center bg-white pl-[12px] font-['Open_Sans',sans-serif] text-[18px] text-black">
            <GridLogo s={24} />
            <span className="ml-[5px] w-[645px] whitespace-nowrap tracking-[-0.285px]">Custom WaveView Version I-2013.12-SP1 Copyright 2000-2014 Synopsys, Inc.</span>
            <span className="whitespace-nowrap tracking-[-0.420px]">Expiration date : 21-oct-2017@hafez.sfsu.edu</span>
            <div className="ml-auto mr-[26px] flex items-center gap-[54px]">
              <svg width="16" height="16"><path d="M0 7.500h15" stroke="#000" /></svg>
              <svg width="16" height="16"><rect x=".500" y=".500" width="14" height="14" fill="none" stroke="#000" /></svg>
              <svg width="16" height="16"><path d="M0 0l15 15M15 0L0 15" stroke="#000" strokeWidth="1.200" /></svg>
            </div>
          </div>
          <div className="flex h-[31px] shrink-0 items-center gap-[18.500px] border-b border-b-[#808080] pl-[9px] pt-px text-[19.500px]">
            {["File", "WaveView", "Panel", "Axes", "Tools", "Config", "Help"].map((m) => (
              <span key={m}>{m}</span>
            ))}
          </div>
          <div className="mt-px shrink-0 border-b border-b-[#707070]"><Toolbar /></div>
          <div className="mt-px h-px shrink-0 bg-white" />
          <div className="flex">
            <Dock />
            <div className="ml-[6px] mr-[2px] h-[1217px] w-[3px] border-l-2 border-r border-l-[#303030] border-r-white" />
            <div className="mt-px flex flex-col">
              <WaveView />
              <div className="flex h-[36px]">
                <div className="-mt-px flex w-[130px] items-center justify-center rounded-br-[3px] border-b-2 border-r-2 border-b-[#202020] border-r-[#202020] bg-[#d4d0c8]">waveview 1</div>
                <div className="flex-1 border-t-2 border-t-[#202020]" />
              </div>
            </div>
            <div className="h-[1182px] w-[2px] bg-[#303030]" />
          </div>
          <div className="flex justify-between pl-[1900px]">
            <div className="mt-px flex h-[38px] w-[231px] border border-b-white border-l-[#808080] border-r-white border-t-[#808080]">
              <div className="m-px w-[166px] border border-r-2 border-b-white border-l-[#808080] border-r-white border-t-[#808080]" />
              <div className="flex flex-1 items-center justify-center pr-[4px]">0%</div>
            </div>
            <svg width="19" height="20" className="mt-[23px] block">
              <path d="M0 20L19 1M5 20L19 6M10 20l9-9M15 20l4-4" stroke="#808080" strokeWidth="1.500" />
              <path d="M2 20L19 3M7 20L19 8M12 20l7-7" stroke="#fff" />
            </svg>
          </div>
        </div>
        <div className="flex w-[2px] flex-col">
          <div className="h-[104px] bg-[#d4d0c8]" />
          <div className="h-[1200px] bg-[#222]" />
          <div className="flex-1 bg-[#999]" />
        </div>
      </div>
      <Taskbar />
    </div>
  );
}
